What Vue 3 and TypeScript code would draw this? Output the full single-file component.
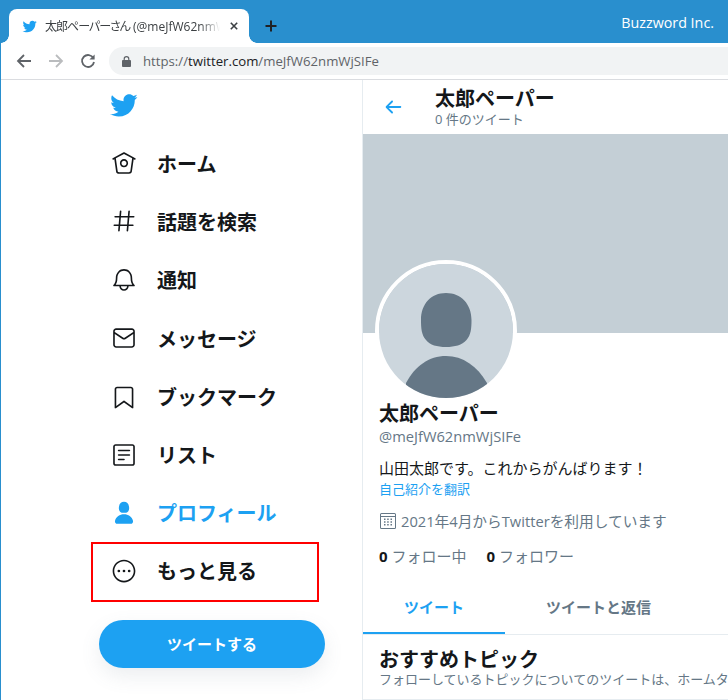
<script setup lang="ts">
const bird = 'M23.643 4.937c-.835.37-1.732.62-2.675.733.962-.576 1.7-1.49 2.048-2.578-.9.534-1.897.922-2.958 1.13-.85-.904-2.06-1.47-3.4-1.47-2.572 0-4.658 2.086-4.658 4.66 0 .364.042.718.12 1.06-3.873-.195-7.304-2.05-9.602-4.868-.4.69-.63 1.49-.63 2.342 0 1.616.823 3.043 2.072 3.878-.764-.025-1.482-.234-2.11-.583v.06c0 2.257 1.605 4.14 3.737 4.568-.392.106-.803.162-1.227.162-.3 0-.593-.028-.877-.082.593 1.85 2.313 3.198 4.352 3.234-1.595 1.25-3.604 1.995-5.786 1.995-.376 0-.747-.022-1.112-.065 2.062 1.323 4.51 2.093 7.14 2.093 8.57 0 13.255-7.098 13.255-13.254 0-.2-.005-.402-.014-.602.91-.658 1.7-1.477 2.323-2.41z'

interface NavItem {
  label: string
  icon: string
  active?: boolean
  marked?: boolean
}

const navItems: NavItem[] = [
  {
    label: 'ホーム',
    icon: 'M22.46 7.57L12.357 2.115c-.223-.12-.49-.12-.713 0L1.543 7.57c-.364.197-.5.652-.303 1.017.135.25.394.393.66.393.12 0 .243-.03.356-.09l.815-.44L4.7 19.963c.214 1.215 1.308 2.062 2.658 2.062h9.282c1.352 0 2.445-.848 2.663-2.087l1.626-11.49.818.442c.364.193.82.06 1.017-.304.196-.363.06-.818-.304-1.016zm-4.638 12.133c-.107.606-.703.822-1.18.822H7.36c-.48 0-1.075-.216-1.178-.798L4.48 7.69 12 3.628l7.522 4.06-1.7 12.015z M8.22 12.184c0 2.084 1.695 3.78 3.78 3.78s3.78-1.696 3.78-3.78-1.695-3.78-3.78-3.78-3.78 1.696-3.78 3.78zm6.06 0c0 1.258-1.022 2.28-2.28 2.28s-2.28-1.022-2.28-2.28 1.022-2.28 2.28-2.28 2.28 1.022 2.28 2.28z'
  },
  {
    label: '話題を検索',
    icon: 'M21 7.337h-3.93l.372-4.272c.036-.412-.27-.775-.682-.812-.417-.03-.776.27-.812.683l-.383 4.4h-6.32l.37-4.27c.037-.413-.27-.776-.68-.813-.42-.03-.777.27-.813.683l-.382 4.4H3.782c-.414 0-.75.337-.75.75s.336.75.75.75H7.61l-.55 6.327H3c-.414 0-.75.336-.75.75s.336.75.75.75h3.93l-.372 4.272c-.036.412.27.775.682.812l.066.003c.385 0 .712-.295.746-.686l.383-4.4h6.32l-.37 4.27c-.036.413.27.776.682.813l.066.003c.385 0 .712-.295.746-.686l.382-4.4h3.957c.413 0 .75-.337.75-.75s-.337-.75-.75-.75H16.39l.55-6.327H21c.414 0 .75-.336.75-.75s-.336-.75-.75-.75zm-6.115 7.826h-6.32l.55-6.326h6.32l-.55 6.326z'
  },
  {
    label: '通知',
    icon: 'M21.697 16.468c-.02-.016-2.14-1.64-2.103-6.03.02-2.532-.812-4.782-2.347-6.335C15.872 2.71 14.01 1.94 12.005 1.93h-.013c-2.004.01-3.866.78-5.242 2.174-1.534 1.553-2.368 3.802-2.346 6.334.037 4.33-2.02 5.967-2.102 6.03-.26.193-.366.53-.265.838.102.308.39.515.712.515h4.92c.102 2.31 1.997 4.16 4.33 4.16s4.226-1.85 4.327-4.16h4.922c.322 0 .61-.206.71-.514.103-.307-.003-.645-.263-.838zM12 20.478c-1.505 0-2.73-1.177-2.828-2.658h5.656c-.1 1.48-1.323 2.66-2.828 2.66zM4.38 16.32c.74-1.132 1.548-3.028 1.524-5.896-.018-2.16.644-3.982 1.913-5.267C8.91 4.05 10.397 3.437 12 3.43c1.603.008 3.087.62 4.18 1.728 1.27 1.285 1.933 3.106 1.915 5.267-.024 2.868.785 4.765 1.525 5.896H4.38z'
  },
  {
    label: 'メッセージ',
    icon: 'M19.25 3.018H4.75C3.233 3.018 2 4.252 2 5.77v12.495c0 1.518 1.233 2.753 2.75 2.753h14.5c1.517 0 2.75-1.235 2.75-2.753V5.77c0-1.518-1.233-2.752-2.75-2.752zm-14.5 1.5h14.5c.69 0 1.25.56 1.25 1.25v.714l-8.05 5.367c-.273.18-.626.182-.9-.002L3.5 6.482v-.714c0-.69.56-1.25 1.25-1.25zm14.5 14.998H4.75c-.69 0-1.25-.56-1.25-1.25V8.24l7.24 4.83c.383.256.822.384 1.26.384.44 0 .877-.128 1.26-.383l7.24-4.83v10.022c0 .69-.56 1.25-1.25 1.25z'
  },
  {
    label: 'ブックマーク',
    icon: 'M19.9 23.5c-.157 0-.312-.05-.442-.144L12 17.928l-7.458 5.43c-.228.164-.53.19-.782.06-.25-.127-.41-.385-.41-.667V5.6c0-1.24 1.01-2.25 2.25-2.25h12.798c1.24 0 2.25 1.01 2.25 2.25v17.15c0 .282-.158.54-.41.668-.106.055-.223.082-.34.082zM12 16.25c.155 0 .31.048.44.144l6.71 4.883V5.6c0-.412-.337-.75-.75-.75H5.6c-.413 0-.75.338-.75.75v15.677l6.71-4.883c.13-.096.285-.144.44-.144z'
  },
  {
    label: 'リスト',
    icon: 'M19.75 22H4.25C3.01 22 2 20.99 2 19.75V4.25C2 3.01 3.01 2 4.25 2h15.5C20.99 2 22 3.01 22 4.25v15.5c0 1.24-1.01 2.25-2.25 2.25zM4.25 3.5c-.414 0-.75.337-.75.75v15.5c0 .413.336.75.75.75h15.5c.414 0 .75-.337.75-.75V4.25c0-.413-.336-.75-.75-.75H4.25z M17 8.64H7c-.414 0-.75-.337-.75-.75s.336-.75.75-.75h10c.414 0 .75.336.75.75s-.336.75-.75.75zm0 4.11H7c-.414 0-.75-.336-.75-.75s.336-.75.75-.75h10c.414 0 .75.336.75.75s-.336.75-.75.75zm-5 4.11H7c-.414 0-.75-.335-.75-.75s.336-.75.75-.75h5c.414 0 .75.337.75.75s-.336.75-.75.75z'
  },
  {
    label: 'プロフィール',
    active: true,
    icon: 'M12 11.816c1.355 0 2.872-.15 3.84-1.256.814-.93 1.078-2.368.806-4.392-.38-2.825-2.117-4.512-4.646-4.512S7.734 3.343 7.354 6.17c-.272 2.022-.008 3.46.806 4.39.968 1.107 2.485 1.256 3.84 1.256zm8.28 7.42c-.877-3.526-4.282-5.99-8.28-5.99s-7.403 2.464-8.28 5.99c-.172.692-.028 1.4.395 1.94.408.52 1.04.82 1.733.82h12.304c.693 0 1.325-.3 1.733-.82.424-.54.567-1.247.394-1.94z'
  },
  {
    label: 'もっと見る',
    marked: true,
    icon: 'M12 1.5C6.2 1.5 1.5 6.2 1.5 12S6.2 22.5 12 22.5 22.5 17.8 22.5 12 17.8 1.5 12 1.5zM12 21C7.03 21 3 16.97 3 12S7.03 3 12 3s9 4.03 9 9-4.03 9-9 9z M7.25 10.75a1.25 1.25 0 1 0 0 2.5 1.25 1.25 0 0 0 0-2.5z M12 10.75a1.25 1.25 0 1 0 0 2.5 1.25 1.25 0 0 0 0-2.5z M16.75 10.75a1.25 1.25 0 1 0 0 2.5 1.25 1.25 0 0 0 0-2.5z'
  }
]
</script>

<template>
  <div class="window">
    <div class="tabstrip">
      <div class="tab">
        <svg class="favicon" viewBox="0 0 24 24"><path :d="bird" /></svg>
        <span class="tab-title"><span class="tab-name">太郎ペーパーさん</span> (@meJfW62nmWjSIFe) / Twitter</span>
        <svg class="tab-close" viewBox="0 0 10 10"><path d="M1 1l8 8M9 1l-8 8" /></svg>
      </div>
      <svg class="new-tab" viewBox="0 0 12 12"><path d="M6 0.5v11M0.5 6h11" /></svg>
      <span class="brand">Buzzword Inc.</span>
    </div>

    <div class="toolbar">
      <svg class="tool" viewBox="0 0 16 16"><path d="M15 8H2M8 2L2 8l6 6" /></svg>
      <svg class="tool forward" viewBox="0 0 16 16"><path d="M1 8h13M8 2l6 6-6 6" /></svg>
      <svg class="tool reload" viewBox="0 0 16 16">
        <path d="M13.4 5.2A6 6 0 1 0 14 9" />
        <path class="solid" d="M14.6 1.4v5.2H9.4z" />
      </svg>
      <div class="address">
        <svg class="lock" viewBox="0 0 10 12">
          <path d="M1.8 4.4V3.2a3.2 3.2 0 0 1 6.4 0v1.2H9a1 1 0 0 1 1 1V11a1 1 0 0 1-1 1H1a1 1 0 0 1-1-1V5.4a1 1 0 0 1 1-1zm1.3 0h3.8V3.2a1.9 1.9 0 0 0-3.8 0z" />
        </svg>
        <span class="url">https://<b>twitter.com</b>/meJfW62nmWjSIFe</span>
      </div>
    </div>

    <div class="page">
      <aside class="sidebar">
        <div class="logo">
          <svg viewBox="0 0 24 24"><path :d="bird" /></svg>
        </div>
        <nav class="nav">
          <a
            v-for="item in navItems"
            :key="item.label"
            class="nav-item"
            :class="{ active: item.active, marked: item.marked }"
          >
            <svg viewBox="0 0 24 24"><path :d="item.icon" /></svg>
            <span>{{ item.label }}</span>
          </a>
        </nav>
        <button class="tweet-button">ツイートする</button>
      </aside>

      <main class="main">
        <header class="main-header">
          <svg class="back" viewBox="0 0 24 24">
            <path d="M20 11H7.414l4.293-4.293c.39-.39.39-1.023 0-1.414s-1.023-.39-1.414 0l-6 6c-.39.39-.39 1.023 0 1.414l6 6c.195.195.45.293.707.293s.512-.098.707-.293c.39-.39.39-1.023 0-1.414L7.414 13H20c.553 0 1-.447 1-1s-.447-1-1-1z" />
          </svg>
          <div>
            <div class="header-name">太郎ペーパー</div>
            <div class="header-count">0 件のツイート</div>
          </div>
        </header>

        <div class="banner"></div>

        <div class="profile">
          <div class="avatar">
            <svg viewBox="0 0 134 134">
              <rect width="134" height="134" fill="#ccd6dd" />
              <path fill="#657786" d="M67 29c-15 0-25 11-25 27 0 8 .5 15 5 20 4 5 11 7 20 7s16-2 20.500-7c4.500-5 5-12 5-20C92.500 40 82 29 67 29z" />
              <path fill="#657786" d="M67 92c-17 0-31 10-40 27v15h81v-15c-10-17-24-27-41-27z" />
            </svg>
          </div>
          <div class="name">太郎ペーパー</div>
          <div class="handle">@meJfW62nmWjSIFe</div>
          <div class="bio">山田太郎です。これからがんばります！</div>
          <div class="translate">自己紹介を翻訳</div>
          <div class="joined">
            <svg viewBox="0 0 18 18">
              <path d="M2.500 1h13A1.500 1.500 0 0 1 17 2.500v13a1.500 1.500 0 0 1-1.500 1.500h-13A1.500 1.500 0 0 1 1 15.500v-13A1.500 1.500 0 0 1 2.500 1zm0 1a.5.5 0 0 0-.5.5V4h14V2.500a.5.5 0 0 0-.5-.5zM2 5v10.500a.5.5 0 0 0 .5.5h13a.5.5 0 0 0 .5-.5V5z" />
              <path d="M5 6.500h1.500V8H5zM8.200 6.500h1.500V8H8.200zM11.500 6.500H13V8h-1.500zM5 9.200h1.500v1.500H5zM8.200 9.200h1.500v1.500H8.200zM11.500 9.200H13v1.500h-1.500zM5 12h1.500v1.500H5zM8.200 12h1.500v1.500H8.200zM11.500 12H13v1.500h-1.500z" />
            </svg>
            <span>2021年4月からTwitterを利用しています</span>
          </div>
          <div class="follows">
            <span><b>0</b> フォロー中</span>
            <span><b>0</b> フォロワー</span>
          </div>
        </div>

        <div class="tabs">
          <div class="profile-tab selected">ツイート</div>
          <div class="profile-tab">ツイートと返信</div>
        </div>

        <section class="topics">
          <h2>おすすめトピック</h2>
          <p>フォローしているトピックについてのツイートは、ホームタイムラインに表示されます。</p>
        </section>
      </main>
    </div>
  </div>
</template>

<style>
html,
body {
  margin: 0;
  overflow: hidden;
}
</style>

<style scoped>
*,
*::before,
*::after {
  box-sizing: border-box;
}
.window {
  width: 728px;
  height: 700px;
  overflow: hidden;
  display: flex;
  flex-direction: column;
  background: #fff;
  border-left: 1px solid #298fce;
  color: #14171a;
  font-family: 'Open Sans', 'Noto Sans CJK JP', sans-serif;
}

/* browser chrome */
.tabstrip {
  height: 43px;
  margin-left: -1px;
  padding: 9px 14px 0 9px;
  flex: none;
  display: flex;
  align-items: flex-start;
  background: #298fce;
}
.tab {
  position: relative;
  width: 240px;
  height: 34px;
  padding: 0 10px 0 13px;
  display: flex;
  align-items: center;
  background: #fff;
  border-radius: 8px 8px 0 0;
}
.tab::before,
.tab::after {
  content: '';
  position: absolute;
  bottom: 0;
  width: 8px;
  height: 8px;
}
.tab::before {
  left: -8px;
  background: radial-gradient(circle at 0 0, #298fce 7.5px, #fff 8px);
}
.tab::after {
  right: -8px;
  background: radial-gradient(circle at 100% 0, #298fce 7.5px, #fff 8px);
}
.favicon {
  width: 15px;
  height: 15px;
  flex: none;
  fill: #1da1f2;
}
.tab-title {
  width: 175px;
  margin-left: 8px;
  overflow: hidden;
  white-space: nowrap;
  font-size: 12px;
  color: #3c4043;
  -webkit-mask-image: linear-gradient(to right, #000 155px, transparent 175px);
  mask-image: linear-gradient(to right, #000 155px, transparent 175px);
}
.tab-name {
  font-feature-settings: 'palt';
  letter-spacing: -1px;
}
.tab-close {
  width: 8px;
  height: 8px;
  margin-left: 10px;
  flex: none;
  fill: none;
  stroke: #3c4043;
  stroke-width: 2;
}
.new-tab {
  width: 12px;
  height: 12px;
  margin: 11px 0 0 16px;
  flex: none;
  fill: none;
  stroke: #202124;
  stroke-width: 2;
}
.brand {
  margin: 4px 0 0 auto;
  font-size: 14.3px;
  line-height: 20px;
  color: #fff;
}
.toolbar {
  height: 37px;
  padding: 4px 0 4px 15px;
  flex: none;
  display: flex;
  align-items: center;
  border-bottom: 1px solid #dadce0;
}
.tool {
  width: 16px;
  height: 16px;
  margin-right: 16px;
  flex: none;
  fill: none;
  stroke: #5f6368;
  stroke-width: 1.8;
}
.tool.forward {
  stroke: #babcbe;
}
.tool.reload {
  margin-right: 13px;
}
.tool .solid {
  fill: #5f6368;
  stroke: none;
}
.address {
  height: 28px;
  flex: 1;
  margin-right: -30px;
  padding-left: 13px;
  display: flex;
  align-items: center;
  background: #f1f3f4;
  border-radius: 14px 0 0 14px;
}
.lock {
  width: 9px;
  height: 11px;
  flex: none;
  fill: #5f6368;
}
.url {
  margin-left: 12px;
  font-size: 13.2px;
  color: #5f6368;
  white-space: nowrap;
}
.url b {
  font-weight: 400;
  color: #202124;
}

/* page */
.page {
  flex: 1;
  min-height: 0;
  display: flex;
}
.sidebar {
  width: 362px;
  flex: none;
  padding-left: 90px;
  border-right: 1px solid #e6ecf0;
}
.logo {
  height: 54px;
  padding: 11px 0 0 18px;
}
.logo svg {
  display: block;
  width: 29px;
  height: 29px;
  fill: #1da1f2;
}
.nav {
  display: flex;
  flex-direction: column;
}
.nav-item {
  width: 228px;
  height: 58.3px;
  padding-left: 18px;
  display: flex;
  align-items: center;
  gap: 20px;
  font-size: 20px;
  font-weight: 700;
  border: 2px solid transparent;
}
.nav-item svg {
  width: 26px;
  height: 26px;
  flex: none;
  fill: #14171a;
}
.nav-item.active {
  color: #1da1f2;
}
.nav-item.active svg {
  fill: #1da1f2;
}
.nav-item.marked {
  height: 60px;
  padding-bottom: 3px;
  border-color: #f00;
}
.tweet-button {
  display: block;
  width: 226px;
  height: 48px;
  margin: 18px 0 0 8px;
  padding: 0 0 2px;
  font-family: inherit;
  font-size: 15px;
  font-weight: 700;
  color: #fff;
  background: #1da1f2;
  border: 0;
  border-radius: 24px;
  box-shadow: 0 8px 20px rgba(101, 119, 134, 0.12);
}
.main {
  flex: 1;
  min-width: 0;
  overflow: hidden;
}
.main-header {
  height: 54px;
  padding-left: 19px;
  display: flex;
  align-items: center;
  gap: 31px;
}
.back {
  width: 22px;
  height: 22px;
  flex: none;
  fill: #1da1f2;
}
.header-name {
  font-size: 20px;
  font-weight: 700;
  line-height: 24px;
}
.header-count {
  font-size: 13px;
  line-height: 16px;
  color: #657786;
}
.banner {
  height: 199px;
  background: #c4cfd6;
}
.profile {
  padding: 0 16px;
}
.avatar {
  width: 142px;
  height: 142px;
  margin: -73px 0 0 -4px;
  border: 4px solid #fff;
  border-radius: 50%;
  overflow: hidden;
  position: relative;
}
.avatar svg {
  display: block;
  width: 100%;
  height: 100%;
}
.name {
  font-size: 20px;
  font-weight: 700;
  line-height: 24px;
}
.handle {
  font-size: 14.7px;
  line-height: 20px;
  color: #657786;
}
.bio {
  margin-top: 12px;
  font-size: 15px;
  line-height: 21px;
}
.translate {
  font-size: 13px;
  line-height: 20px;
  color: #1da1f2;
}
.joined {
  margin-top: 12px;
  display: flex;
  align-items: center;
  gap: 4px;
  font-size: 14.7px;
  line-height: 20px;
  color: #657786;
  white-space: nowrap;
}
.joined svg {
  width: 18px;
  height: 18px;
  flex: none;
  fill: #657786;
}
.follows {
  margin-top: 15px;
  display: flex;
  gap: 20px;
  font-size: 15px;
  line-height: 20px;
  color: #657786;
  white-space: nowrap;
}
.follows b {
  color: #14171a;
}
.tabs {
  height: 55px;
  margin-top: 14px;
  display: flex;
  border-bottom: 1px solid #e6ecf0;
}
.profile-tab {
  width: 142px;
  height: 54px;
  padding-top: 17px;
  text-align: center;
  font-size: 15px;
  font-weight: 700;
  line-height: 20px;
  color: #657786;
}
.profile-tab.selected {
  color: #1da1f2;
  border-bottom: 2px solid #1da1f2;
}
.profile-tab + .profile-tab {
  width: 187px;
}
.topics {
  padding: 13px 16px 0;
  height: 65px;
  border-bottom: 1px solid #e6ecf0;
}
.topics h2 {
  margin: 0;
  font-size: 20px;
  font-weight: 700;
  line-height: 23px;
}
.topics p {
  margin: 0;
  font-size: 13px;
  line-height: 16px;
  color: #657786;
  white-space: nowrap;
}
</style>
